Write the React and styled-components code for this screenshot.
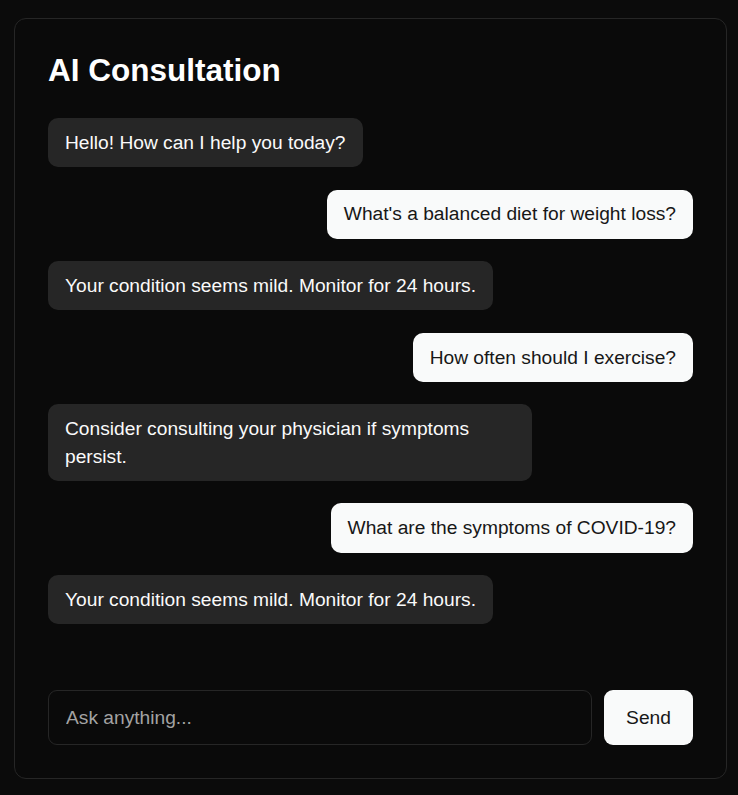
import React, { useState } from 'react';
import styled, { createGlobalStyle } from 'styled-components';

const GlobalStyle = createGlobalStyle`
  * { box-sizing: border-box; }
  body {
    margin: 0;
    background: #0b0b0b;
    font-family: "Liberation Sans", Arial, sans-serif;
    color: #fafafa;
  }
`;

const Page = styled.div`
  padding: 18px 11px 17px 14px;
`;

const Card = styled.div`
  border: 1px solid #262626;
  border-radius: 12px;
  background: #0a0a0a;
  padding: 33px;
  display: flex;
  flex-direction: column;
`;

const Title = styled.h1`
  font-size: 31.5px;
  line-height: 36px;
  font-weight: 700;
  color: #fff;
  margin: 0 0 30px;
`;

const Messages = styled.div`
  height: 548px;
  overflow-y: auto;
  display: flex;
  flex-direction: column;
  gap: 22.4px;
`;

const Bubble = styled.div`
  align-self: ${(p) => (p.$user ? 'flex-end' : 'flex-start')};
  max-width: 75%;
  padding: 10.85px 17px;
  border-radius: 10px;
  font-size: 19.2px;
  line-height: 27.5px;
  background: ${(p) => (p.$user ? '#f9fafa' : '#262626')};
  color: ${(p) => (p.$user ? '#171717' : '#fafafa')};
`;

const Form = styled.form`
  display: flex;
  gap: 12px;
  margin-top: 24px;
`;

const Input = styled.input`
  flex: 1;
  height: 55px;
  padding: 0 17px;
  background: #0a0a0a;
  border: 1px solid #262626;
  border-radius: 9px;
  color: #fafafa;
  font-family: inherit;
  font-size: 19.2px;
  outline: none;

  &::placeholder {
    color: #a3a3a3;
  }
`;

const SendButton = styled.button`
  width: 89px;
  height: 55px;
  border: none;
  border-radius: 9px;
  background: #f9fafa;
  color: #171717;
  font-family: inherit;
  font-size: 19.2px;
  cursor: pointer;
`;

const initialMessages = [
  { id: 1, user: false, text: 'Hello! How can I help you today?' },
  { id: 2, user: true, text: "What's a balanced diet for weight loss?" },
  { id: 3, user: false, text: 'Your condition seems mild. Monitor for 24 hours.' },
  { id: 4, user: true, text: 'How often should I exercise?' },
  { id: 5, user: false, text: 'Consider consulting your physician if symptoms persist.' },
  { id: 6, user: true, text: 'What are the symptoms of COVID-19?' },
  { id: 7, user: false, text: 'Your condition seems mild. Monitor for 24 hours.' },
];

const App = () => {
  const [messages] = useState(initialMessages);
  const [draft, setDraft] = useState('');

  return (
    <Page>
      <GlobalStyle />
      <Card>
        <Title>AI Consultation</Title>
        <Messages>
          {messages.map((m) => (
            <Bubble key={m.id} $user={m.user}>
              {m.text}
            </Bubble>
          ))}
        </Messages>
        <Form onSubmit={(e) => e.preventDefault()}>
          <Input
            placeholder="Ask anything..."
            value={draft}
            onChange={(e) => setDraft(e.target.value)}
          />
          <SendButton type="submit">Send</SendButton>
        </Form>
      </Card>
    </Page>
  );
};

export default App;
